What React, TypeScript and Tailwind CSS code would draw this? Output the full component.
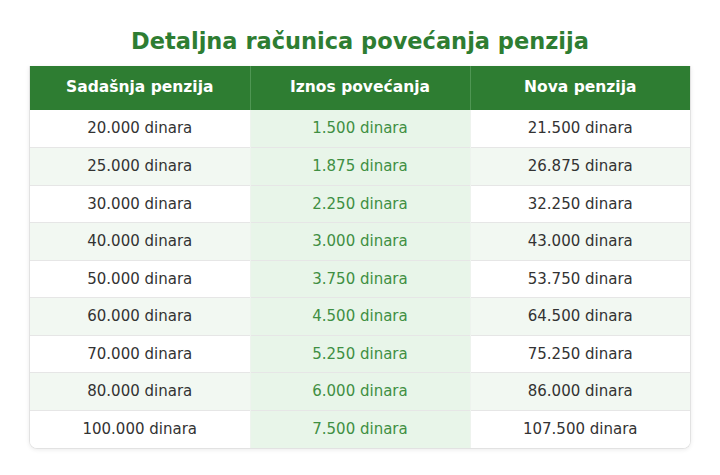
const rows = [
  ["20.000 dinara", "1.500 dinara", "21.500 dinara"],
  ["25.000 dinara", "1.875 dinara", "26.875 dinara"],
  ["30.000 dinara", "2.250 dinara", "32.250 dinara"],
  ["40.000 dinara", "3.000 dinara", "43.000 dinara"],
  ["50.000 dinara", "3.750 dinara", "53.750 dinara"],
  ["60.000 dinara", "4.500 dinara", "64.500 dinara"],
  ["70.000 dinara", "5.250 dinara", "75.250 dinara"],
  ["80.000 dinara", "6.000 dinara", "86.000 dinara"],
  ["100.000 dinara", "7.500 dinara", "107.500 dinara"],
];

const headers = ["Sadašnja penzija", "Iznos povećanja", "Nova penzija"];

export default function App() {
  return (
    <div className="h-[475px] w-[720px] bg-white font-['DejaVu_Sans',sans-serif]">
      <h2 className="pt-[27px] text-center text-[22.5px] font-bold leading-[28px] text-[#2e7d32]">
        Detaljna računica povećanja penzija
      </h2>
      <div className="mx-auto mt-[11px] w-[662px] overflow-hidden rounded-b-lg border border-t-0 border-[#e2e2e2] shadow-[0_1px_4px_rgba(0,0,0,0.08)]">
        <table className="w-full table-fixed border-collapse text-center">
          <thead>
            <tr className="h-[44px] bg-[#2e7d32] text-[15.5px] font-bold text-white">
              {headers.map((h, i) => (
                <th
                  key={h}
                  className={i > 0 ? "border-l border-[#4f9653]" : ""}
                >
                  {h}
                </th>
              ))}
            </tr>
          </thead>
          <tbody className="text-[15px] text-[#333]">
            {rows.map((r, ri) => (
              <tr
                key={r[0]}
                className={`h-[37.5px] ${ri > 0 ? "border-t border-[#e6e6e6]" : ""} ${
                  ri % 2 === 1 ? "bg-[#f2f8f2]" : "bg-white"
                }`}
              >
                <td>{r[0]}</td>
                <td className="border-x border-[#eef3ee] bg-[#e8f5e9] text-[#3f8f43]">
                  {r[1]}
                </td>
                <td>{r[2]}</td>
              </tr>
            ))}
          </tbody>
        </table>
      </div>
    </div>
  );
}
